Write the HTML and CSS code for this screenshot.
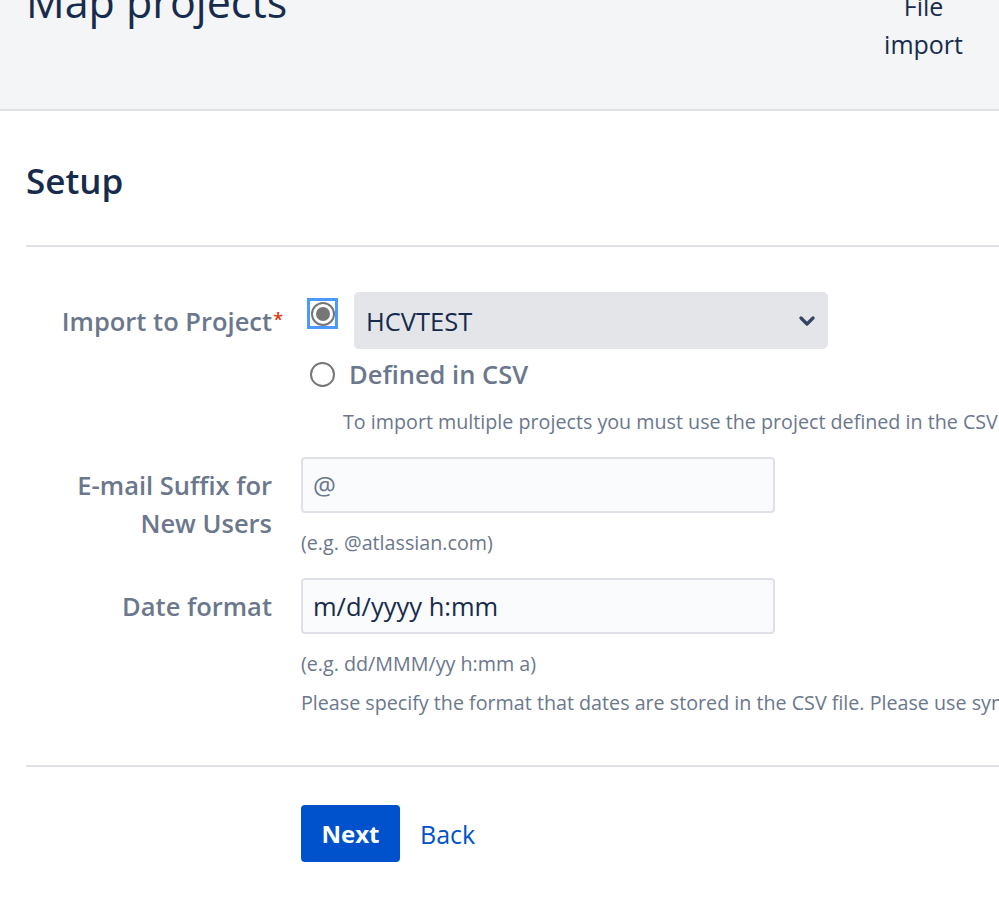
FILE: index.html
```html
<!DOCTYPE html>
<html lang="en">
<head>
<meta charset="utf-8">
<title>Map projects</title>
<link rel="stylesheet" href="styles.css">
</head>
<body>
<header class="page-header">
  <h1 class="page-title">Map projects</h1>
  <nav class="steps">
    <div class="step">File<br>import</div>
  </nav>
</header>
<main class="content">
  <h2 class="section-title">Setup</h2>
  <hr class="divider">
  <form class="form">
    <div class="field-group">
      <label class="field-label required-label">Import to Project<span class="required">*</span></label>
      <div class="field">
        <div class="choice-row">
          <span class="focus-ring"><span class="radio checked"></span></span>
          <div class="select">
            <span class="select-value">HCVTEST</span>
            <svg class="chevron" width="16" height="10" viewBox="0 0 16 10"><path d="M2 2 L8 8 L14 2" fill="none" stroke="#344563" stroke-width="3.2" stroke-linecap="round" stroke-linejoin="round"/></svg>
          </div>
        </div>
        <div class="choice-row second">
          <span class="radio"></span>
          <span class="choice-label">Defined in CSV</span>
        </div>
        <div class="help indent">To import multiple projects you must use the project defined in the CSV</div>
      </div>
    </div>
    <div class="field-group">
      <label class="field-label">E-mail Suffix for<br>New Users</label>
      <div class="field">
        <div class="text-input">@</div>
        <div class="help first">(e.g. @atlassian.com)</div>
      </div>
    </div>
    <div class="field-group">
      <label class="field-label">Date format</label>
      <div class="field">
        <div class="text-input dark">m/d/yyyy h:mm</div>
        <div class="help first">(e.g. dd/MMM/yy h:mm a)</div>
        <div class="help next">Please specify the format that dates are stored in the CSV file. Please use syntax valid for SimpleDateFormat</div>
      </div>
    </div>
  </form>
  <hr class="divider bottom">
  <div class="buttons">
    <button class="btn-primary" type="button">Next</button>
    <a class="link" href="#">Back</a>
  </div>
</main>
</body>
</html>
```
FILE: styles.css
```css
html, body {
  margin: 0;
  padding: 0;
  overflow: hidden;
}
body {
  font-family: "Open Sans", "Noto Sans", "Liberation Sans", sans-serif;
  color: #172b4d;
  background: #ffffff;
  width: 999px;
  height: 906px;
}
.page-header {
  height: 109px;
  background: #f4f5f7;
  border-bottom: 2px solid #dfe1e6;
  display: flex;
  justify-content: space-between;
  align-items: flex-start;
  padding-left: 26px;
  padding-right: 36px;
  overflow: hidden;
}
.page-title {
  margin: -26px 0 0 0;
  font-size: 43px;
  line-height: 56px;
  font-weight: 400;
  color: #172b4d;
  white-space: nowrap;
}
.steps {
  margin-top: -13px;
}
.step {
  font-size: 25px;
  line-height: 38px;
  text-align: center;
  color: #172b4d;
}
.content {
  padding-left: 26px;
}
.section-title {
  margin: 0;
  padding-top: 45px;
  font-size: 35px;
  line-height: 50px;
  font-weight: 600;
  color: #172b4d;
}
.divider {
  border: 0;
  border-top: 2px solid #dfe1e6;
  margin: 39px 0 0 0;
  height: 0;
}
.form {
  padding-top: 45px;
}
.field-group {
  display: grid;
  grid-template-columns: 246px 1fr;
  column-gap: 29px;
  margin-bottom: 21px;
}
.field-label {
  text-align: right;
  font-size: 25.5px;
  font-weight: 600;
  color: #6b778c;
  line-height: 38px;
  padding-top: 9px;
  white-space: nowrap;
}
.required-label {
  margin-right: -11px;
  padding-top: 8px;
}
.required {
  color: #de350b;
  font-size: 18px;
  margin-left: 1px;
  vertical-align: 5px;
}
.field {
  min-width: 0;
}
.choice-row {
  display: flex;
  align-items: flex-start;
}
.focus-ring {
  margin-left: 6px;
  margin-top: 6px;
  width: 31px;
  height: 31px;
  box-sizing: border-box;
  border: 3px solid #4c9aff;
  display: flex;
  align-items: center;
  justify-content: center;
}
.radio {
  width: 24px;
  height: 24px;
  box-sizing: border-box;
  border: 2px solid #767676;
  border-radius: 50%;
  background: #fff;
  display: flex;
  align-items: center;
  justify-content: center;
  flex: none;
}
.radio.checked::after {
  content: "";
  width: 14px;
  height: 14px;
  border-radius: 50%;
  background: #767676;
}
.select {
  margin-left: 16px;
  width: 474px;
  height: 57px;
  box-sizing: border-box;
  background: #e3e5e9;
  border-radius: 5px;
  display: flex;
  align-items: center;
  justify-content: space-between;
  padding: 0 13px 0 12px;
}
.select-value {
  font-size: 25.5px;
  color: #172b4d;
}
.chevron {
  display: block;
}
.choice-row.second {
  align-items: center;
  margin-top: 5px;
  height: 40px;
}
.choice-row.second .radio {
  margin-left: 9px;
  width: 25px;
  height: 25px;
}
.choice-label {
  margin-left: 14px;
  font-size: 25.5px;
  font-weight: 600;
  color: #6b778c;
}
.help {
  font-size: 19.7px;
  line-height: 28px;
  color: #6b778c;
  white-space: nowrap;
}
.help.indent {
  margin-left: 42px;
  margin-top: 14px;
}
.text-input {
  width: 474px;
  height: 56px;
  box-sizing: border-box;
  border: 2px solid #dfe1e6;
  border-radius: 4px;
  background: #fafbfc;
  font-size: 25.5px;
  line-height: 52px;
  padding-left: 10px;
  color: #6b778c;
}
.text-input.dark {
  color: #172b4d;
}
.help.first {
  margin-top: 16px;
}
.help.next {
  margin-top: 11px;
}
.divider.bottom {
  margin-top: 48px;
}
.buttons {
  display: flex;
  align-items: center;
  padding-left: 275px;
  padding-top: 38px;
}
.btn-primary {
  width: 99px;
  height: 57px;
  background: #0052cc;
  color: #fff;
  border: 0;
  border-radius: 4px;
  font-family: inherit;
  font-size: 24px;
  font-weight: 700;
  padding: 0;
}
.link {
  margin-left: 20px;
  color: #0052cc;
  font-size: 25px;
  text-decoration: none;
}
```
